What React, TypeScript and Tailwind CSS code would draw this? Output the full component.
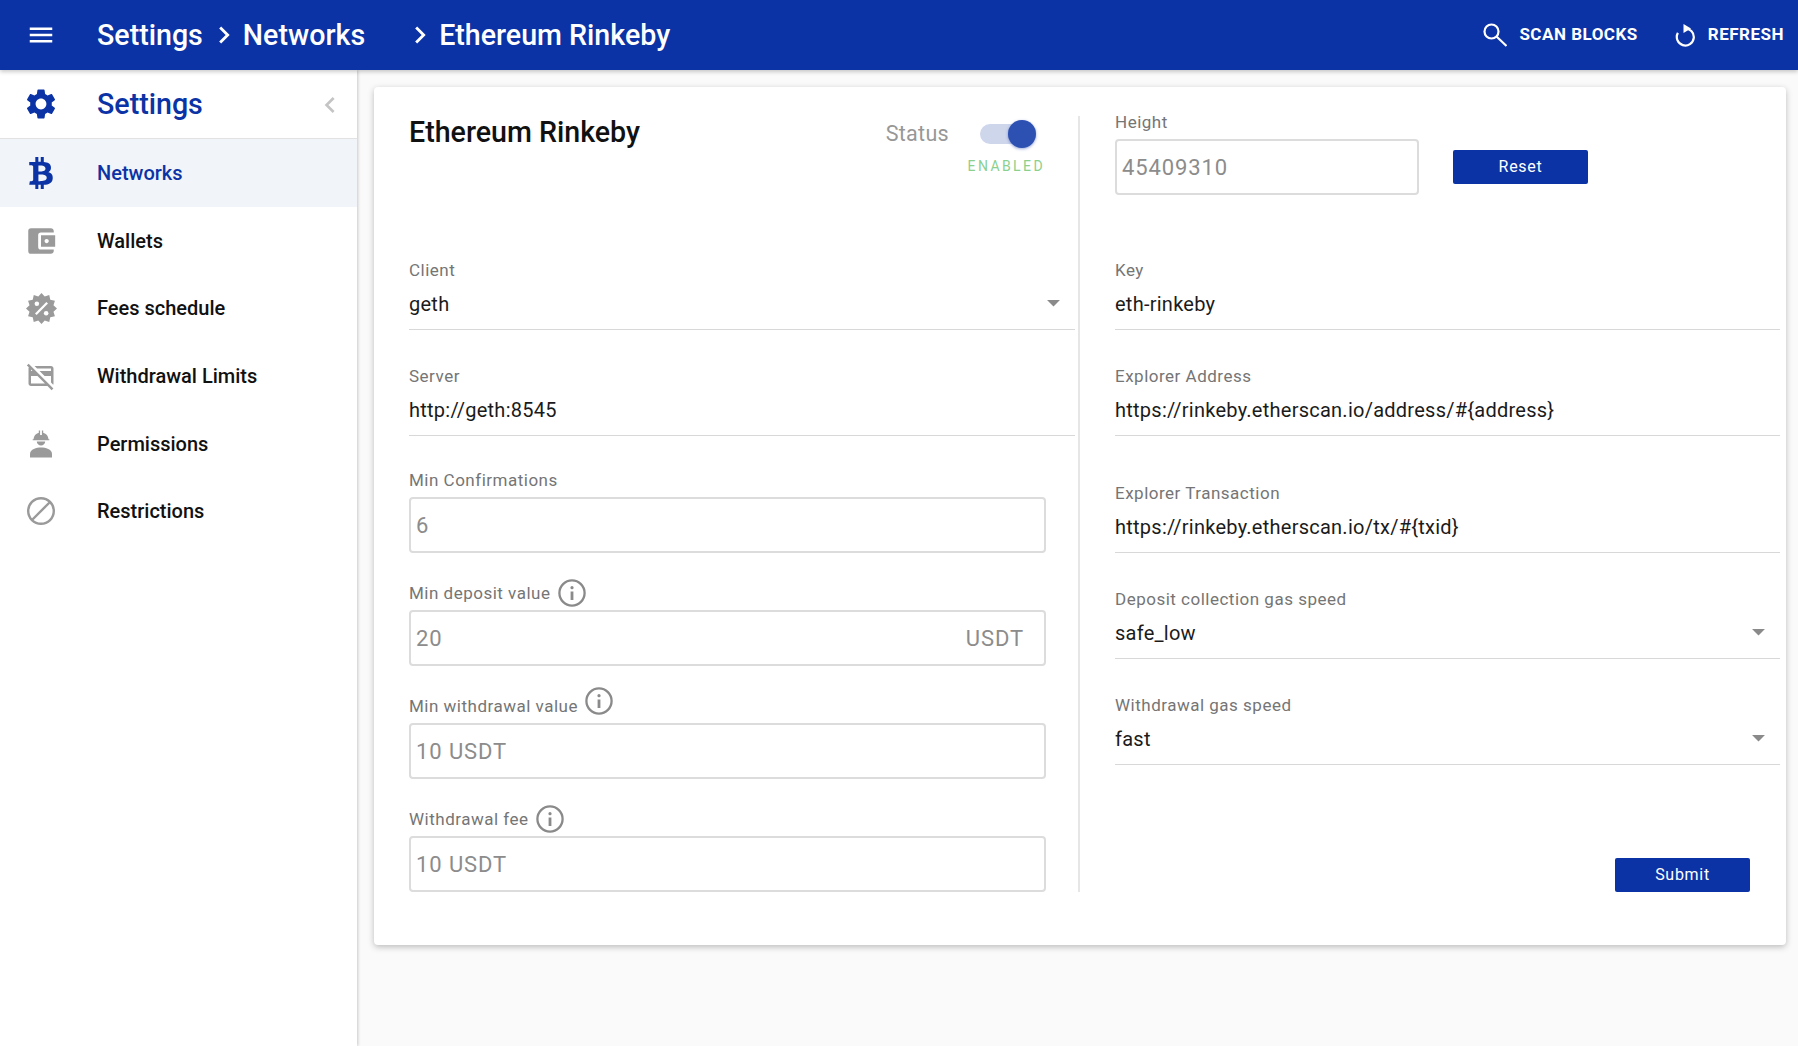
import { ReactNode } from 'react'
import { FaBtc } from 'react-icons/fa'
import {
  MdAccountBalanceWallet,
  MdArrowDropDown,
  MdChevronLeft,
  MdChevronRight,
  MdMenu,
  MdOutlineCreditCardOff,
  MdSettings,
} from 'react-icons/md'

function HardHatPerson({ className }: { className?: string }) {
  return (
    <svg viewBox="0 0 24 28" className={className} fill="currentColor">
      <path d="M4.500 9.200a7.500 7.500 0 0 1 5.300-6.500V.5h1.300v4.500h1.800V.5h1.300v2.200a7.500 7.500 0 0 1 5.300 6.500h.8v1.100H3.700V9.200z" />
      <path d="M7.800 11.400h8.400a4.200 4.200 0 0 1-8.400 0z" />
      <path d="M12 17.500c-4.500 0-11 1.600-11 6.500v3.500h22V24c0-4.900-6.500-6.500-11-6.500z" />
    </svg>
  )
}

// 12 point badge with a percent sign cut out of it
function PercentBadge({ className }: { className?: string }) {
  const points = Array.from({ length: 24 }, (_, i) => {
    const r = i % 2 === 0 ? 15 : 12
    const a = (i * Math.PI) / 12 - Math.PI / 2
    return `${(15 + r * Math.cos(a)).toFixed(2)},${(15 + r * Math.sin(a)).toFixed(2)}`
  }).join(' ')
  return (
    <svg viewBox="0 0 30 30" className={className}>
      <polygon points={points} fill="currentColor" />
      <path d="M9.500 20.500 20.500 9.500" stroke="#ffffff" strokeWidth="2.200" />
      <circle cx="10.500" cy="10.500" r="2.200" fill="#ffffff" />
      <circle cx="19.500" cy="19.500" r="2.200" fill="#ffffff" />
    </svg>
  )
}

function BlockIcon({ className }: { className?: string }) {
  return (
    <svg viewBox="0 0 30 30" className={className} fill="none" stroke="currentColor" strokeWidth="2.400">
      <circle cx="15" cy="15" r="12.800" />
      <path d="M6 24 24 6" />
    </svg>
  )
}

function SearchIcon({ className }: { className?: string }) {
  return (
    <svg viewBox="0 0 24 24" className={className} fill="none" stroke="currentColor" strokeWidth="2.200">
      <circle cx="8.500" cy="8.500" r="7" />
      <path d="M13.500 13.500 23.500 23" />
    </svg>
  )
}

function RefreshIcon({ className }: { className?: string }) {
  return (
    <svg viewBox="0 0 24 24" className={className} fill="none" stroke="currentColor" strokeWidth="2.200">
      <path d="M10.500 5.600a8.500 8.500 0 1 1-6.600 4.300" />
      <path d="M9.500 1 17 5.500 9.500 10z" fill="currentColor" stroke="none" />
    </svg>
  )
}

function InfoIcon({ className }: { className?: string }) {
  return (
    <svg viewBox="0 0 28 28" className={`h-7 w-7 text-[#8a8a8a] ${className ?? ''}`} fill="none" stroke="currentColor" strokeWidth="2.300">
      <circle cx="14" cy="14" r="12.600" />
      <circle cx="14" cy="8.700" r="1.600" fill="currentColor" stroke="none" />
      <path d="M14 12.500v8.500" strokeWidth="2.800" />
    </svg>
  )
}

const navItems = [
  { label: 'Networks', icon: <FaBtc className="h-8 w-8" />, active: true },
  { label: 'Wallets', icon: <MdAccountBalanceWallet className="h-[34px] w-[34px]" /> },
  { label: 'Fees schedule', icon: <PercentBadge className="h-[31px] w-[31px]" /> },
  { label: 'Withdrawal Limits', icon: <MdOutlineCreditCardOff className="h-[30px] w-[30px]" /> },
  { label: 'Permissions', icon: <HardHatPerson className="h-7 w-6" /> },
  { label: 'Restrictions', icon: <BlockIcon className="h-[30px] w-[30px]" /> },
]

function Label({ children }: { children: ReactNode }) {
  return <div className="text-[17px] leading-5 tracking-[0.5px] text-[#757575]">{children}</div>
}

function UnderlineField({ label, value, select, className }: { label: string; value: string; select?: boolean; className?: string }) {
  return (
    <div className={className}>
      <Label>{label}</Label>
      <div className="mt-[13px] flex h-[37px] items-start justify-between border-b border-[#d8d8d8]">
        <span className="text-[20px] leading-[22px] tracking-[0.25px] text-[#1b1b1b]">{value}</span>
        {select && <MdArrowDropDown className="mr-[6px] h-[31px] w-[31px] -translate-y-[6px] text-[#8a8a8a]" />}
      </div>
    </div>
  )
}

function BoxField({ label, value, suffix, info, lift, className }: { label: string; value: string; suffix?: string; info?: boolean; lift?: boolean; className: string }) {
  return (
    <div className={className}>
      <div className="flex h-7 items-center gap-[7px]">
        <Label>{label}</Label>
        {info && <InfoIcon className={lift ? '-translate-y-[5px]' : ''} />}
      </div>
      <div className="mt-[3px] flex h-[56px] w-[637px] items-center justify-between rounded border-2 border-[#dcdcdc] pl-[5px] pr-[20px]">
        <span className="text-[22px] tracking-[0.9px] text-[#8c8c8c]">{value}</span>
        {suffix && <span className="text-[22px] tracking-[0.9px] text-[#8c8c8c]">{suffix}</span>}
      </div>
    </div>
  )
}

export default function App() {
  return (
    <div className="flex h-[1046px] flex-col overflow-hidden bg-[#fafafa] font-['Roboto',sans-serif]">
      <header className="relative z-20 flex h-[70px] shrink-0 items-center justify-between bg-[#0b33a5] pr-[14px] text-white shadow-[0_2px_4px_rgba(0,0,0,0.2)]">
        <div className="flex items-center">
          <MdMenu className="ml-[26px] h-[30px] w-[30px]" />
          <div className="ml-[41px] flex items-center text-[28.600px] font-medium">
            <span>Settings</span>
            <MdChevronRight className="ml-[4px] mr-[2px] h-[34px] w-[34px]" />
            <span>Networks</span>
            <MdChevronRight className="ml-[38px] mr-[2px] h-[34px] w-[34px]" />
            <span>Ethereum Rinkeby</span>
          </div>
        </div>
        <div className="flex items-center">
          <SearchIcon className="h-6 w-6" />
          <span className="ml-[12px] text-[17px] font-bold tracking-[0.5px]">SCAN BLOCKS</span>
          <RefreshIcon className="ml-[36px] h-6 w-6" />
          <span className="ml-[10px] text-[17px] font-bold tracking-[0.5px]">REFRESH</span>
        </div>
      </header>
      <div className="flex min-h-0 flex-1">
        <aside className="relative z-10 w-[357px] shrink-0 bg-white shadow-[1px_0_3px_rgba(0,0,0,0.2)]">
          <div className="flex h-[69px] items-center justify-between border-b border-[#e2e2e2] pr-[11px] pt-px text-[#0b33a5]">
            <div className="flex items-center">
              <MdSettings className="ml-[23px] h-[36px] w-[36px]" />
              <span className="ml-[38px] text-[28.600px] font-medium">Settings</span>
            </div>
            <MdChevronLeft className="h-8 w-8 text-[#c4c4c4]" />
          </div>
          {navItems.map((item) => (
            <div
              key={item.label}
              className={`flex h-[67.700px] items-center ${item.active ? 'bg-[#f1f4f9] text-[#0b33a5]' : 'text-[#111111]'}`}
            >
              <div className={`flex w-[82px] shrink-0 justify-center ${item.active ? 'text-[#0b33a5]' : 'text-[#9a9a9a]'}`}>{item.icon}</div>
              <span className="ml-[15px] text-[20px] font-medium">{item.label}</span>
            </div>
          ))}
        </aside>
        <main className="min-w-0 flex-1 pl-[17px] pr-[12px] pt-[17px]">
          <div className="flex h-[858px] rounded bg-white pl-[35px] pt-[29px] shadow-[0_2px_6px_rgba(0,0,0,0.25)]">
            <section className="h-[776px] w-[671px] shrink-0 border-r-2 border-[#e6e6e6]">
              <div className="flex h-[144px] items-start justify-between pr-[33px]">
                <h1 className="text-[28.600px] font-medium leading-8 text-[#111111]">Ethereum Rinkeby</h1>
                <div className="flex flex-col items-end">
                  <div className="mr-[9px] mt-[2px] flex items-center">
                    <span className="text-[21.500px] tracking-[0.3px] text-[#979797]">Status</span>
                    <div className="relative ml-[31px] flex h-8 w-[56px] items-center">
                      <div className="h-[20px] w-[44px] rounded-full bg-[#ced6ec]" />
                      <div className="absolute right-0 h-[28px] w-[28px] rounded-full bg-[#2d50b3] shadow-[0_1px_3px_rgba(45,80,179,0.5)]" />
                    </div>
                  </div>
                  <span className="mt-[6px] text-[14px] tracking-[2.400px] text-[#8bd08d]">ENABLED</span>
                </div>
              </div>
              <UnderlineField label="Client" value="geth" select className="mr-[3px]" />
              <UnderlineField label="Server" value="http://geth:8545" className="mr-[3px] mt-[36px]" />
              <BoxField label="Min Confirmations" value="6" className="mt-[30px]" />
              <BoxField label="Min deposit value" value="20" suffix="USDT" info className="mt-[26px]" />
              <BoxField label="Min withdrawal value" value="10 USDT" info lift className="mt-[26px]" />
              <BoxField label="Withdrawal fee" value="10 USDT" info className="mt-[26px]" />
            </section>
            <section className="ml-[35px] flex h-[776px] min-w-0 flex-1 flex-col pr-[6px]">
              <div className="flex h-[144px] items-start">
                <div className="-mt-[4px]">
                  <Label>Height</Label>
                  <div className="mt-[7px] flex h-[56px] w-[304px] items-center rounded border-2 border-[#dcdcdc] pl-[5px]">
                    <span className="text-[22px] tracking-[0.9px] text-[#8c8c8c]">45409310</span>
                  </div>
                </div>
                <button className="ml-[34px] mt-[34px] h-[34px] w-[135px] rounded-[2px] bg-[#0b33a5] text-[16px] tracking-[0.7px] text-white">Reset</button>
              </div>
              <UnderlineField label="Key" value="eth-rinkeby" />
              <UnderlineField label="Explorer Address" value="https://rinkeby.etherscan.io/address/#{address}" className="mt-[36px]" />
              <UnderlineField label="Explorer Transaction" value="https://rinkeby.etherscan.io/tx/#{txid}" className="mt-[47px]" />
              <UnderlineField label="Deposit collection gas speed" value="safe_low" select className="mt-[36px]" />
              <UnderlineField label="Withdrawal gas speed" value="fast" select className="mt-[36px]" />
              <div className="mt-auto flex justify-end pr-[30px]">
                <button className="h-[34px] w-[135px] rounded-[2px] bg-[#0b33a5] text-[16px] tracking-[0.7px] text-white">Submit</button>
              </div>
            </section>
          </div>
        </main>
      </div>
    </div>
  )
}
